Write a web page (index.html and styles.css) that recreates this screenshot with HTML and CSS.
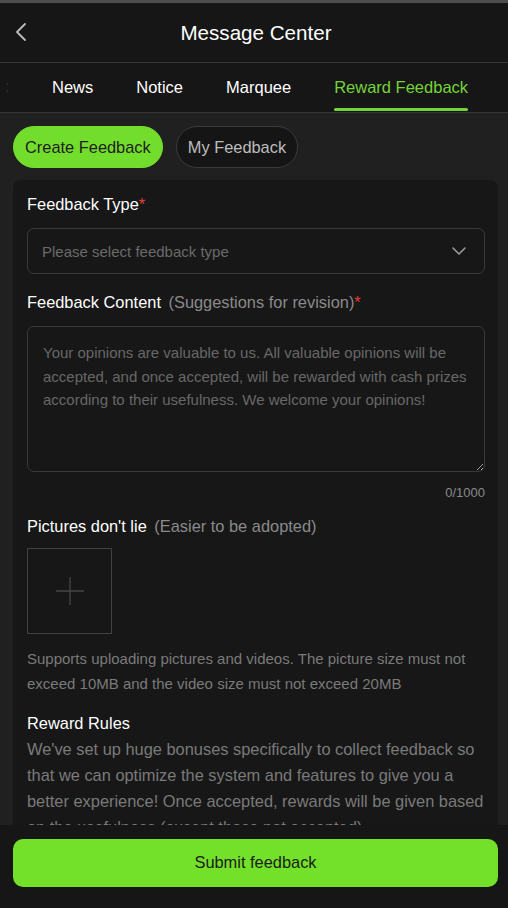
FILE: index.html
```html
<!DOCTYPE html>
<html lang="en">
<head>
<meta charset="utf-8">
<title>Message Center</title>
<link rel="stylesheet" href="styles.css">
</head>
<body>
<div class="app">
  <div class="topline"></div>
  <header class="header">
    <span class="back">
      <svg width="14" height="20" viewBox="0 0 14 20"><path d="M11 2 L3 10 L11 18" fill="none" stroke="#bdbdbd" stroke-width="1.8" stroke-linecap="round" stroke-linejoin="round"/></svg>
    </span>
    <h1 class="title">Message Center</h1>
  </header>
  <nav class="tabs">
    <span class="tab-clip">:</span>
    <a class="tab">News</a>
    <a class="tab">Notice</a>
    <a class="tab">Marquee</a>
    <a class="tab active">Reward Feedback</a>
  </nav>
  <main class="content">
    <div class="pills">
      <button class="pill pill-active">Create Feedback</button>
      <button class="pill">My Feedback</button>
    </div>
    <section class="card">
      <div class="label">Feedback Type<span class="req">*</span></div>
      <div class="select">
        <span class="select-ph">Please select feedback type</span>
        <svg width="16" height="10" viewBox="0 0 16 10"><path d="M2 2 L8 8 L14 2" fill="none" stroke="#9a9a9a" stroke-width="1.6" stroke-linecap="round" stroke-linejoin="round"/></svg>
      </div>
      <div class="label gap">Feedback Content <span class="sub">(Suggestions for revision)</span><span class="req">*</span></div>
      <textarea class="textarea" placeholder="Your opinions are valuable to us. All valuable opinions will be accepted, and once accepted, will be rewarded with cash prizes according to their usefulness. We welcome your opinions!"></textarea>
      <div class="counter">0/1000</div>
      <div class="label gap2">Pictures don't lie <span class="sub">(Easier to be adopted)</span></div>
      <div class="upload">
        <svg width="30" height="30" viewBox="0 0 30 30"><path d="M15 1 V29 M1 15 H29" stroke="#454545" stroke-width="1.3"/></svg>
      </div>
      <p class="help">Supports uploading pictures and videos. The picture size must not exceed 10MB and the video size must not exceed 20MB</p>
      <div class="label rules-title">Reward Rules</div>
      <p class="rules">We've set up huge bonuses specifically to collect feedback so that we can optimize the system and features to give you a better experience! Once accepted, rewards will be given based on the usefulness (except those not accepted).</p>
    </section>
  </main>
  <footer class="footer">
    <button class="submit">Submit feedback</button>
  </footer>
</div>
</body>
</html>
```

FILE: styles.css
```css
* { box-sizing: border-box; }
html, body { margin: 0; padding: 0; background: #161616; }
body { font-family: "Liberation Sans", Arial, sans-serif; color: #fff; }
.app { width: 508px; height: 908px; display: flex; flex-direction: column; overflow: hidden; background: #202020; }
.topline { height: 3px; background: #4d4d4d; flex: none; }
.header { height: 60px; flex: none; background: #161616; border-bottom: 1px solid #363636; display: flex; align-items: center; justify-content: center; position: relative; padding-left: 4px; }
.back { position: absolute; left: 14px; top: 19px; width: 14px; height: 20px; display: flex; }
.title { margin: 0; font-size: 20.6px; font-weight: normal; color: #fff; }
.tabs { height: 50px; flex: none; background: #161616; border-bottom: 1px solid #363636; display: flex; align-items: stretch; padding-left: 30px; position: relative; }
.tab-clip { position: absolute; left: 5px; top: 14px; font-size: 16px; color: #2e2e2e; line-height: 20px; }
.tab { padding: 0 21.5px; font-size: 16.5px; color: #fff; display: flex; align-items: center; position: relative; padding-bottom: 1px; }
.tab:first-of-type { padding-left: 22px; }
.tab.active { color: #74d33a; }
.tab.active::after { content: ""; position: absolute; left: 21.5px; right: 21.5px; bottom: 1px; height: 3px; border-radius: 2px; background: #74d33a; }
.content { flex: 1; overflow: hidden; padding: 13px 10px 0 13px; background: #202020; }
.pills { display: flex; gap: 13px; }
.pill { height: 42px; border-radius: 21px; padding: 0 11px; font-family: inherit; font-size: 16.4px; border: 1px solid #3a3a3a; background: #151515; color: #bdbdbd; }
.pill-active { background: #73dd2e; border-color: #73dd2e; color: #1e1e1e; }
.card { margin-top: 12px; background: #171717; border-radius: 8px; padding: 12px 13px 20px 14px; }
.label { font-size: 16.4px; line-height: 24px; color: #fff; }
.label.gap { margin-top: 16px; }
.label.gap2 { margin-top: 12px; }
.req { color: #e0413a; }
.sub { color: #8a8a8a; margin-left: 3px; }
.select { margin-top: 12px; height: 46px; border: 1px solid #3a3a3a; border-radius: 7px; display: flex; align-items: center; justify-content: space-between; padding: 0 17px 0 14px; }
.select-ph { font-size: 15px; color: #6a6a6a; }
.textarea { display: block; width: 100%; margin-top: 12px; height: 146px; background: transparent; border: 1px solid #3a3a3a; border-radius: 7px; padding: 14px 15px; font-family: "Liberation Sans", Arial, sans-serif; font-size: 15px; line-height: 23.5px; color: #ccc; outline: none; }
.textarea::placeholder { color: #676767; }
.counter { margin-top: 12px; text-align: right; font-size: 13px; line-height: 18px; color: #8a8a8a; }
.upload { margin-top: 10px; width: 85px; height: 86px; border: 1px solid #414141; display: flex; align-items: center; justify-content: center; }
.help { margin: 12px 0 0; font-size: 15px; line-height: 25px; color: #7a7a7a; }
.rules-title { margin-top: 15px; }
.rules { margin: 1px 0 0; font-size: 16.4px; line-height: 26px; color: #7a7a7a; }
.footer { flex: none; height: 83px; background: #161616; padding: 14px 10px 0 13px; }
.submit { width: 485px; height: 48px; border: none; border-radius: 10px; background: #73e02a; color: #1c1c1c; font-family: inherit; font-size: 16.4px; padding-bottom: 2px; }
```
